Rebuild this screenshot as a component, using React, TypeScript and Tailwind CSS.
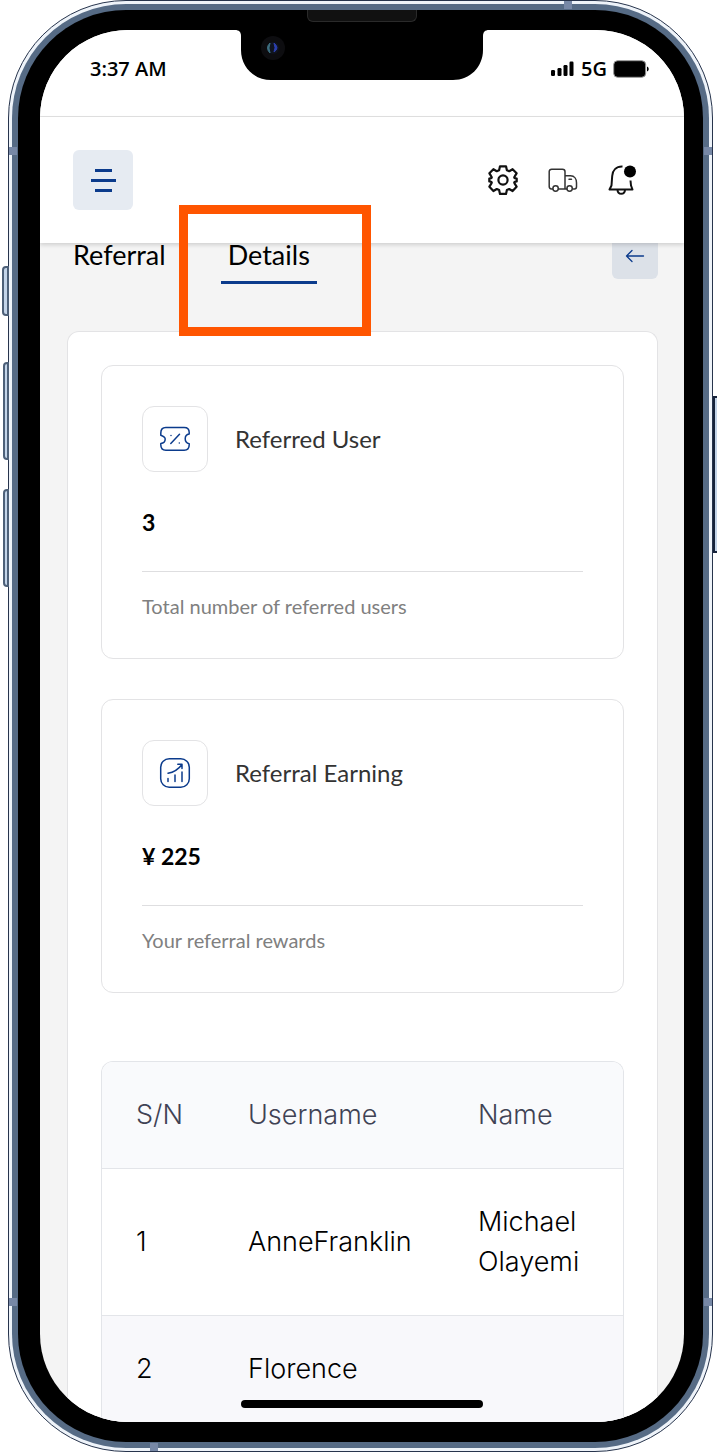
import { ReactNode } from 'react'

const referrals = [
  { id: 1, username: 'AnneFranklin', name: 'Michael Olayemi' },
  { id: 2, username: 'Florence', name: '' },
]

function GearIcon() {
  return (
    <svg viewBox="0 0 30 30" className="size-[30px]" fill="none" stroke="#111" strokeWidth="2.2" strokeLinejoin="round">
      <circle cx="15" cy="15" r="4.6" />
      <path d="M12 1.3h6l.9 3.9 2.3 1 3.400-2 4 4.100-1.900 3c-.9 1.300-.6 1.900 2 2.300v2.800c-2.600.4-2.900 1-2 2.300l1.900 3-4 4.300-3.400-2-2.300 1-.9 3.900h-6l-.9-3.900-2.300-1-3.400 2-4-4.300 1.900-3c.9-1.300.6-1.900-2-2.300v-2.800c2.600-.4 2.900-1 2-2.300l-1.900-3 4-4.100 3.400 2 2.300-1z" />
    </svg>
  )
}

function TruckIcon() {
  return (
    <svg viewBox="0 0 30 30" className="size-[30px]" fill="none" stroke="#333" strokeWidth="1.5" strokeLinejoin="round" strokeLinecap="round">
      <path d="M4.5 24h-1A2.5 2.5 0 0 1 1.2 21.5V6.5A2.5 2.5 0 0 1 3.7 4.2h10.8A2.5 2.5 0 0 1 17 6.7V24H10.5M17 10.8h5.5c4 0 6 3.2 6 7v4c0 1.3-.7 2.2-2 2.2h-1.2M19 24h-2M21 14.2h2.500" />
      <circle cx="7.6" cy="23.5" r="2.7" />
      <circle cx="21.6" cy="23.5" r="2.7" />
    </svg>
  )
}

function BellIcon() {
  return (
    <svg viewBox="0 0 30 30" className="size-[30px]" fill="none" stroke="#111" strokeWidth="2" strokeLinejoin="round">
      <path d="M14.5 1.5C8 1.3 4.5 5.5 4.2 11L3.5 20.5 1.5 24.5h23L23 20.5l-.5-5M9.5 25c.3 5 7.200 5 7.500 0" />
      <circle cx="22" cy="6.500" r="6" fill="#000" stroke="none" />
    </svg>
  )
}

function TicketIcon() {
  return (
    <svg viewBox="0 0 32 32" className="size-8" fill="none" stroke="#0b3b8c" strokeWidth="1.5" strokeLinecap="round" strokeLinejoin="round">
      <path d="M1.8 12.3V10c0-4 1.5-5.5 5-5.5h18.4c3.5 0 5 1.5 5 5v1.6c-2.4.3-4 2.3-4 4.7s1.6 4.5 4 4.9v1c0 4-1.5 5.500-5 5.500H6.800c-3.500 0-5-1.500-5-5.500v-1.200c2.600-.1 4.400-2 4.400-4.400 0-2-1.800-2.800-4.400-3.800z" />
      <path d="M11.8 20.5l8.7-9.200M12 12.500v.1M20.300 20v.1" />
    </svg>
  )
}

function ChartIcon() {
  return (
    <svg viewBox="0 0 32 32" className="size-8" fill="none" stroke="#0b3b8c" strokeWidth="1.5" strokeLinecap="round" strokeLinejoin="round">
      <rect x="1.7" y="1.7" width="28.6" height="28.6" rx="8.5" />
      <path d="M9 24.5v-3M16 24.5v-6.5M23 24.5v-9.5M9 16.2c6-.9 10.5-4 14-8.7M18.8 7.3H23v4.200" />
    </svg>
  )
}

function ArrowIcon() {
  return (
    <svg viewBox="0 0 20 20" className="size-5" fill="none" stroke="#0b3b8c" strokeWidth="1.3" strokeLinecap="round" strokeLinejoin="round">
      <path d="M18.5 10H1.5M7 4.5 1.5 10 7 15.5" />
    </svg>
  )
}

function StatusBar() {
  return (
    <div className="flex items-center justify-between border-b border-[#e2e2e2] bg-white pt-[25px] pr-[35px] pb-[33px] pl-[50px] font-['Open_Sans',sans-serif] text-[20px] leading-7 font-semibold text-black">
      <span>3:37 AM</span>
      <div className="flex items-center gap-[6px]">
        <svg viewBox="0 0 24 16" className="h-4 w-6">
          <rect x="0" y="9" width="4" height="6" rx="1.2" />
          <rect x="6.5" y="7" width="4" height="8" rx="1.2" />
          <rect x="12.5" y="4" width="4" height="11" rx="1.2" />
          <rect x="18.5" y="0.5" width="4" height="14.5" rx="1.2" />
        </svg>
        <span>5G</span>
        <svg viewBox="0 0 36 18" className="h-[18px] w-9">
          <rect x="0.7" y="0.7" width="32" height="16.6" rx="4" stroke="#999" />
          <path d="M34 6.500c2.300.8 2.300 4.200 0 5z" />
        </svg>
      </div>
    </div>
  )
}

function TopBar() {
  return (
    <header className="relative z-10 flex items-center justify-between bg-white py-[33px] pr-[46px] pl-[33px] shadow-[0_2px_4px_rgba(0,0,0,0.15)]">
      <button aria-label="Menu" className="flex size-[60px] flex-col items-center justify-center gap-[7px] rounded-md bg-[#e6ebf2]">
        <span className="h-[3px] w-[17px] bg-[#0b3b8c]" />
        <span className="h-[3px] w-[25px] bg-[#0b3b8c]" />
        <span className="h-[3px] w-[17px] bg-[#0b3b8c]" />
      </button>
      <div className="flex items-center gap-[30px]">
        <button aria-label="Settings"><GearIcon /></button>
        <button aria-label="Deliveries"><TruckIcon /></button>
        <button aria-label="Notifications"><BellIcon /></button>
      </div>
    </header>
  )
}

function Tabs() {
  return (
    <nav className="-mt-[10px] flex items-start justify-between pr-[26px] pl-[26px]">
      <div className="flex items-start gap-12 text-[27px] leading-[36px] text-black">
        <button className="px-[7px] pt-1 pb-2">Referral</button>
        <div className="relative">
          <button className="border-b-[3px] border-[#0b3b8c] px-[7px] pt-1 pb-2">Details</button>
          <div className="pointer-events-none absolute -top-[28px] -right-[54px] -left-[42px] z-20 h-[131px] border-[9px] border-[#ff5500]" />
        </div>
      </div>
      <button aria-label="Back" className="flex size-[46px] items-center justify-center rounded-md bg-[#dce1e8]">
        <ArrowIcon />
      </button>
    </nav>
  )
}

interface StatCardProps {
  icon: ReactNode
  title: string
  value: string
  note: string
}

function StatCard({ icon, title, value, note }: StatCardProps) {
  return (
    <section className="rounded-xl border border-[#e3e3e5] px-10 pt-10 pb-[38px]">
      <div className="flex items-center gap-[27px]">
        <div className="flex size-[66px] items-center justify-center rounded-xl border border-[#e3e3e5]">{icon}</div>
        <h2 className="text-[24px] leading-8 text-[#333]">{title}</h2>
      </div>
      <p className="mt-8 text-[23px] leading-9 font-bold text-black">{value}</p>
      <p className="mt-[31px] border-t border-[#dedee0] pt-5 text-[20px] leading-7 text-[#808080]">{note}</p>
    </section>
  )
}

function ReferralTable() {
  return (
    <div className="overflow-hidden rounded-t-xl border border-b-0 border-[#e3e5e9]">
      <table className="w-full text-left font-['Inter',sans-serif] text-[27px] leading-10 font-light">
        <thead className="bg-[#f9fafc] text-[#3f4254]">
          <tr className="border-b border-[#e3e5e9]">
            <th className="w-[112px] py-[33px] pl-[34px] font-light">S/N</th>
            <th className="w-[230px] py-[33px] pl-[34px] font-light">Username</th>
            <th className="px-[34px] py-[33px] font-light">Name</th>
          </tr>
        </thead>
        <tbody className="text-black">
          {referrals.map((row) => (
            <tr key={row.id} className="border-b border-[#e3e5e9] last:border-b-0 even:bg-[#f8f8fb]">
              <td className="py-[33px] pl-[34px]">{row.id}</td>
              <td className="py-[33px] pl-[34px]">{row.username}</td>
              <td className="px-[34px] py-[33px]">{row.name}</td>
            </tr>
          ))}
        </tbody>
      </table>
    </div>
  )
}

// side keys and antenna bands of the handset
function Hardware() {
  return (
    <>
      <div className="absolute top-[266px] left-[2px] h-[50px] w-[7px] rounded-l-sm border-2 border-[#4d6078] bg-[#c3d4e8]" />
      <div className="absolute top-[362px] left-[3px] h-[98px] w-[6px] rounded-l-sm border-2 border-[#4d6078] bg-[#c3d4e8]" />
      <div className="absolute top-[489px] left-[3px] h-[98px] w-[6px] rounded-l-sm border-2 border-[#4d6078] bg-[#c3d4e8]" />
      <div className="absolute top-[396px] right-0 h-[157px] w-[4px] border-y-2 border-l-2 border-[#16223a] bg-[#c3d4e8]" />
      <div className="absolute top-[147px] left-[9px] h-2 w-2 bg-[#7788a6]" />
      <div className="absolute top-[147px] right-[5px] h-2 w-2 bg-[#7788a6]" />
      <div className="absolute bottom-[146px] left-[9px] h-2 w-2 bg-[#7788a6]" />
      <div className="absolute right-[5px] bottom-[146px] h-2 w-2 bg-[#7788a6]" />
      <div className="absolute top-px right-[145px] h-2 w-2 bg-[#7788a6]" />
      <div className="absolute bottom-px left-[150px] h-2 w-2 bg-[#7788a6]" />
    </>
  )
}

function Notch() {
  return (
    <>
      <svg viewBox="0 0 254 50" className="absolute top-0 left-1/2 z-20 h-[50px] w-[254px] -translate-x-1/2">
        <path d="M0 0h254c-4 0-6 2-6 6v14c0 17-13 30-30 30H36C19 50 6 37 6 20V6c0-4-2-6-6-6z" />
        <circle cx="38" cy="18" r="12" fill="#0d0d10" />
        <circle cx="38" cy="18" r="6" fill="#10141f" />
        <path d="M35 13q-5 5 0 10q-2-5 0-10z" fill="#3d6f80" stroke="#3d6f80" />
        <path d="M39 13q6 5 0 9q2-4 0-9z" fill="#2b3fae" stroke="#2b3fae" />
      </svg>
      <div className="absolute -top-5 left-1/2 z-20 h-3 w-[110px] -translate-x-1/2 rounded-b-md border border-t-0 border-[#2a2a2a] bg-[#111]" />
    </>
  )
}

export default function App() {
  return (
    <div className="relative overflow-hidden bg-white pr-1 pl-2 font-['Lato',sans-serif]">
      <Hardware />
      <div className="rounded-[118px] border border-[#27344c] bg-[#eef3f9] p-[3px]">
        <div className="rounded-[114px] bg-[#566b85] p-[6px]">
          <div className="rounded-[108px] bg-black pt-5 pr-[19px] pb-5 pl-[22px]">
            <div className="relative">
              <Notch />
              <main className="overflow-hidden rounded-[88px] bg-[#f4f4f4]">
                <StatusBar />
                <TopBar />
                <Tabs />
                <div className="mt-[47px] mr-[26px] ml-[27px] rounded-t-xl border border-b-0 border-[#e3e3e5] bg-white px-[33px] pt-[33px]">
                  <div className="flex flex-col gap-10">
                    <StatCard icon={<TicketIcon />} title="Referred User" value="3" note="Total number of referred users" />
                    <StatCard icon={<ChartIcon />} title="Referral Earning" value="¥ 225" note="Your referral rewards" />
                  </div>
                  <div className="mt-[68px]">
                    <ReferralTable />
                  </div>
                </div>
              </main>
              <div className="absolute bottom-[14px] left-1/2 h-2 w-[242px] -translate-x-1/2 rounded-full bg-black" />
            </div>
          </div>
        </div>
      </div>
    </div>
  )
}
